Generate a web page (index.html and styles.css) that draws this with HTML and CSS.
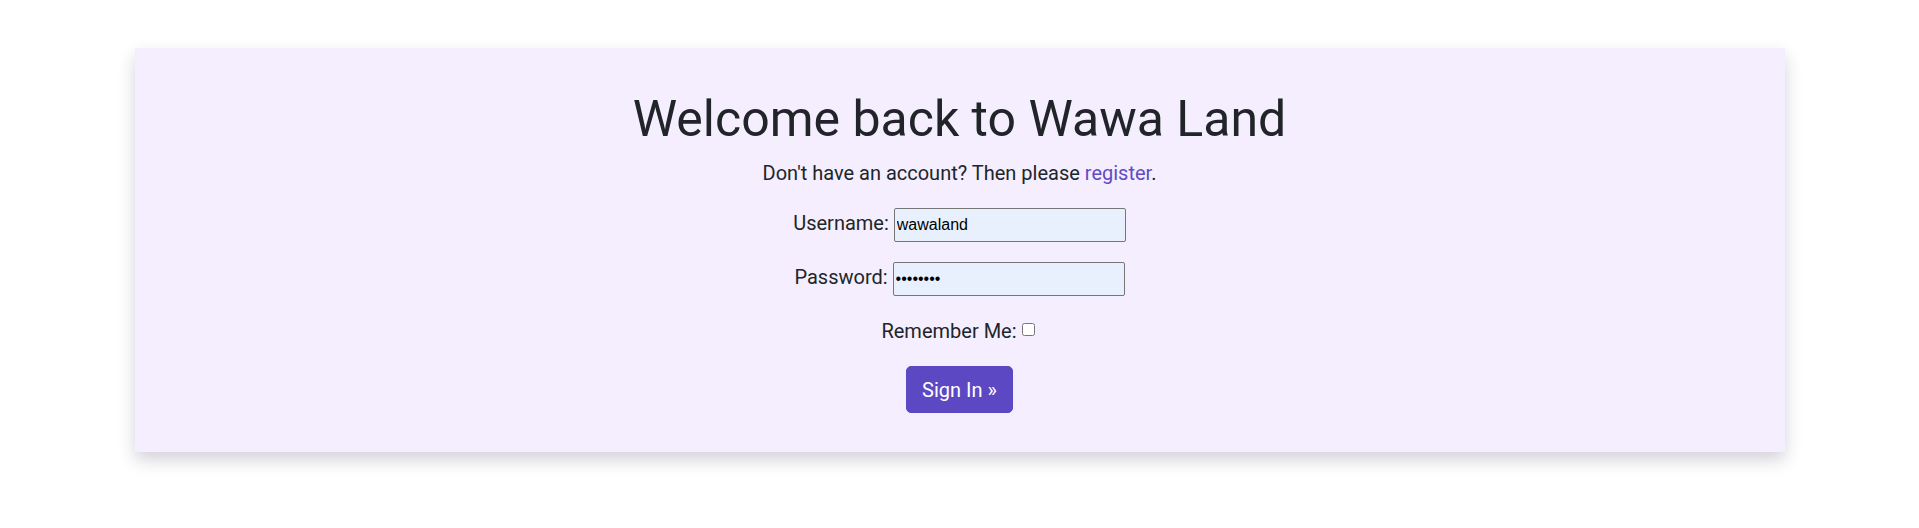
FILE: index.html
```html
<!DOCTYPE html>
<html lang="en">
<head>
<meta charset="utf-8">
<title>Sign In - Wawa Land</title>
<link rel="stylesheet" href="styles.css">
</head>
<body>
<main class="page">
  <section class="card">
    <h1 class="title">Welcome back to Wawa Land</h1>
    <p class="lead-line">Don't have an account? Then please <a class="link" href="#">register</a>.</p>
    <form class="login-form">
      <p class="row"><label class="label" for="username">Username:</label> <input class="field" id="username" type="text" value="wawaland"></p>
      <p class="row"><label class="label" for="password">Password:</label> <input class="field" id="password" type="password" value="wawaland"></p>
      <p class="row"><label class="label" for="remember">Remember Me:</label><input class="check" id="remember" type="checkbox"></p>
      <p class="row"><button class="btn" type="button">Sign In &raquo;</button></p>
    </form>
  </section>
</main>
</body>
</html>
```

FILE: styles.css
```css
html {
  font-size: 20px;
}

body {
  margin: 0;
  min-height: 100vh;
  background: #ffffff;
  font-family: Roboto, "Liberation Sans", Arial, sans-serif;
  font-size: 20px;
  line-height: 1.5;
  color: #212529;
}

.page {
  padding: 48px 0 60px;
}

.card {
  max-width: 1650px;
  margin: 0 auto;
  box-sizing: border-box;
  background: #f4eefe;
  padding: 41px 20px 19px;
  text-align: center;
  box-shadow: 0 8px 16px rgba(40, 30, 70, 0.2);
}

.title {
  margin: 0 0 9px;
  font-size: 50px;
  font-weight: 400;
  line-height: 1.2;
  color: #212529;
}

.lead-line {
  margin: 0 0 20px;
}

.link {
  color: #5f4bc4;
  text-decoration: none;
}

.login-form {
  margin: 0;
}

.row {
  margin: 0 0 20px;
}

.field {
  box-sizing: border-box;
  width: 232px;
  height: 34px;
  padding: 0 2px;
  border: 1px solid #767676;
  border-radius: 2px;
  background: #e8f0fe;
  color: #000;
  font-family: "Liberation Sans", Arial, sans-serif;
  font-size: 16px;
  vertical-align: baseline;
}

.check {
  width: 13px;
  height: 13px;
  margin: 3px 3px 3px 5px;
  vertical-align: 2px;
}

.btn {
  display: inline-block;
  padding: 7.5px 15px;
  border: 1px solid #5d48c3;
  border-radius: 5px;
  background: #5d48c3;
  color: #ffffff;
  font-family: Roboto, "Liberation Sans", Arial, sans-serif;
  font-size: 20px;
  line-height: 1.5;
  cursor: pointer;
}
```
